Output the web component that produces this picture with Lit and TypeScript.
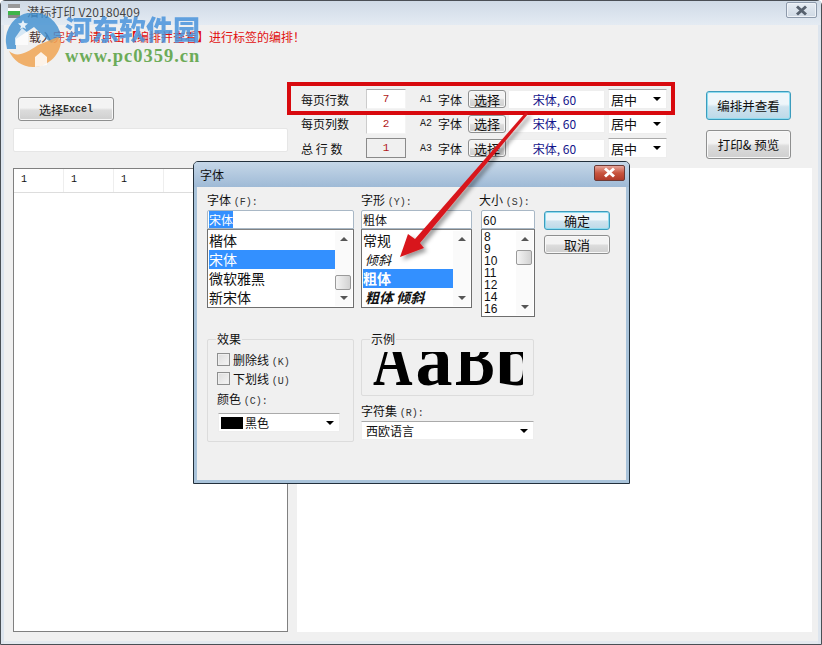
import { LitElement, html, css } from "lit";
import { customElement } from "lit/decorators.js";

const closeX = html`<svg width="13" height="11" viewBox="0 0 13 11"><path d="M2 1.5 L11 9.5 M11 1.5 L2 9.5" stroke="currentColor" stroke-width="3" fill="none"/></svg>`;
const caret = html`<span class="caret"></span>`;

@customElement("app-root")
export class AppRoot extends LitElement {
  static styles = css`
    :host { display: block; width: 822px; height: 645px; overflow: hidden; position: relative;
      font-family: "Noto Sans CJK SC", "Noto Sans", sans-serif; font-size: 12px; color: #111; }
    * { box-sizing: border-box; }
    .window { width: 822px; height: 645px; background: #f0f0f0; border: 1px solid #4a4f55; border-radius: 5px 5px 0 0;
      display: flex; flex-direction: column; box-shadow: inset 3px 0 0 #dde5ee, inset -3px 0 0 #dde5ee, inset 0 -3px 0 #e4e9ef; }
    .titlebar { height: 24px; flex: none; display: flex; align-items: center; background: linear-gradient(#cfdae6, #e4ebf3);
      padding: 0 4px 0 7px; }
    .app-ico { width: 12px; height: 14px; flex: none; margin-right: 7px; margin-top: -4px; background: linear-gradient(#999 0 4px, #fff 4px 7px, #3fb54a 7px 11px, #888 11px); }
    .title { color: #444; font-size: 12px; flex: 1; margin-top: -3px; letter-spacing: .15px; }
    .win-close { width: 31px; height: 16px; margin-top: -6px; border: 1px solid #8d9aab; border-radius: 2px; color: #57616e; background: linear-gradient(#e6ecf3, #cfd9e4);
      display: flex; align-items: center; justify-content: center; box-shadow: inset 0 0 0 1px #eef2f7; }
    .msg { height: 48px; padding: 3px 0 0 28px; color: #e10f0f; line-height: 18px; flex: none; }
    .msg b { font-weight: 400; color: #4a3030; }
    .msg em { font-style: normal; color: #d8302a; }
    .toolbar { display: flex; flex: none; height: 95px; padding-left: 12px; }
    .left { width: 275px; flex: none; display: flex; flex-direction: column; padding-top: 24px; }
    .left .btn { width: 96px; height: 24px; margin: 0 0 7px 5px; }
    .left .btn span { font-family: "Liberation Mono", monospace; font-size: 10px; font-weight: 700; color: #333; }
    .path { width: 275px; height: 24px; background: #fff; border: 1px solid #e6e6e6; border-radius: 2px; }
    .rows { width: 379px; margin-left: 13px; padding-top: 15px; flex: none; display: flex; flex-direction: column; gap: 2.5px; }
    .row { display: grid; grid-template-columns: 65px 40px 14px 18px 30px 39px 101px 59px; align-items: center; height: 22px; }
    .field { height: 20px; background: #fff; border: 1px solid #f4f4f4; border-top-color: #aaa; border-left-color: #ccc; color: #b01818; display: flex; align-items: center; justify-content: center; font-family: "Liberation Mono", monospace; font-size: 11px; }
    .field.ro { background: #f0f0f0; border: 1px solid #8a8a8a; }
    .a { font-family: "Liberation Mono", monospace; font-size: 10px; color: #222; }
    .btn { display: flex; align-items: center; justify-content: center; border: 1px solid #8e8f8f; border-radius: 3px; background: linear-gradient(#f3f3f3 0 45%, #dcdcdc 55%, #cfcfcf); color: #111; box-shadow: inset 0 0 0 1px #f8f8f8; padding: 0; font-family: inherit; font-size: 12px; }
    .btn.sm { width: 38px; height: 18px; font-size: 13px; }
    .btn.focus { border-color: #3c9cbd; background: linear-gradient(#eef6fa 0 45%, #cfe3ee 55%, #bcd9e8); box-shadow: inset 0 0 0 1px #8edcf0; }
    .fontval { height: 19px; margin-left: 1px; width: 97px; background: #fff; border: 1px solid #eee; color: #14148a; display: flex; align-items: center; justify-content: center; padding-right: 4px; }
    .combo { height: 20px; background: #fff; border: 1px solid #eee; border-top-color: #aaa; display: flex; align-items: center; padding: 0 2px; justify-content: space-between; color: #111; font-size: 13px; }
    .caret { width: 0; height: 0; border: 4px solid transparent; border-top: 4px solid #000; border-bottom: 0; margin-right: 3px; flex: none; }
    .actions { margin-left: 26px; width: 85px; padding-top: 18px; display: flex; flex-direction: column; gap: 10px; flex: none; }
    .actions .btn { height: 29px; font-size: 12.5px; }
    .content { flex: 1; display: flex; padding: 0 9px 12px 12px; gap: 9px; min-height: 0; }
    .table { width: 275px; border: 1px solid #808080; background: #fff; }
    .thead { height: 24px; display: grid; grid-template-columns: repeat(3, 50px) 1fr; border-bottom: 1px solid #ddd; }
    .thead div { border-right: 1px solid #eee; padding-left: 7px; line-height: 22px; font-family: "Liberation Mono", monospace; font-size: 10px; }
    .preview { flex: 1; background: #fff; }

    .watermark { position: absolute; left: 4px; top: 13px; display: flex; pointer-events: none; }
    .wm-text { margin-left: 3px; display: flex; flex-direction: column; }
    .wm-cn { color: #4a94dc; font-size: 27px; font-weight: 900; line-height: 32px; opacity: .85; }
    .wm-url { color: #6cab58; font-family: "Liberation Serif", serif; font-weight: 700; font-size: 18.5px; line-height: 22px; margin-top: 0; letter-spacing: 1px; }

    .redbox { position: absolute; left: 287px; top: 82px; width: 388px; height: 33px; border: 4px solid #d8090e; pointer-events: none; }
    .arrow { position: absolute; left: 0; top: 0; pointer-events: none; z-index: 3; }

    .dialog { position: absolute; left: 193px; top: 161px; width: 437px; height: 323px; border: 1px solid #22303c; border-radius: 5px 5px 0 0; background: #f0f0f0; display: flex; flex-direction: column; box-shadow: inset 0 0 0 3px #a9c3da, inset 0 -3px 0 #5aa9c6; z-index: 2; }
    .d-title { height: 25px; flex: none; display: flex; align-items: center; padding: 0 4px 0 6px; background: linear-gradient(#c5d7e8, #9fbad6); border-radius: 4px 4px 0 0; }
    .d-title span { flex: 1; }
    .d-close { width: 31px; height: 16px; margin-top: -4px; border: 1px solid #6b3a36; border-radius: 2px; color: #fff; background: linear-gradient(#e6a59b, #c9553f 50%, #b03a2a); display: flex; align-items: center; justify-content: center; }
    .d-body { flex: 1; padding: 6px 0 0 13px; display: flex; flex-direction: column; }
    .top { display: flex; height: 136px; flex: none; }
    .col { display: flex; flex-direction: column; }
    .c1 { width: 147px; }
    .c2 { width: 111px; margin-left: 7px; }
    .c3 { width: 54px; margin-left: 9px; }
    .cap { height: 17px; line-height: 13px; white-space: nowrap; }
    .c3 .cap { margin-left: -2px; }
    i { font-style: normal; font-family: "Liberation Mono", monospace; font-size: 10px; color: #333; }
    .edit { height: 19px; background: #fff; border: 1px solid #a9b8c6; border-radius: 2px 2px 0 0; line-height: 17px; padding-left: 1px; flex: none; }
    .sel { background: #3390ff; color: #fff; }
    .list { height: 79px; background: #fff; border: 1px solid #6e6e6e; border-top-color: #828282; display: flex; padding: 1px; position: relative; flex: none; }
    .list.long { height: 88px; }
    .items { flex: 1; font-size: 14px; overflow: hidden; min-width: 0; }
    .items div { height: 19px; line-height: 19px; white-space: nowrap; }
    .sm-items { font-size: 12px; padding-left: 1px; }
    .sm-items div { height: 12px; line-height: 12px; font-family: "Liberation Sans", sans-serif; }
    .items div.on { background: #3390ff; color: #fff; font-weight: 700; }
    .items div.on-n { background: #3390ff; color: #fff; }
    .items div.italic { font-style: italic; font-size: 13px; padding-left: 2px; }
    .items div.bi { font-style: italic; font-weight: 700; font-size: 14px; padding-left: 2px; }
    .scroll { width: 17px; flex: none; display: flex; flex-direction: column; justify-content: space-between; align-items: center; padding: 6px 0; background: #fafafa; position: relative; }
    .tri-u { width: 0; height: 0; border: 4px solid transparent; border-bottom: 4px solid #555; border-top: 0; }
    .tri-d { width: 0; height: 0; border: 4px solid transparent; border-top: 4px solid #555; border-bottom: 0; }
    .thumb { position: absolute; left: 0; width: 16px; height: 15px; border: 1px solid #9a9a9a; border-radius: 2px; background: linear-gradient(90deg, #f4f4f4, #d2d2d2); }
    .dlg-btns { margin-left: 9px; padding-top: 18px; display: flex; flex-direction: column; gap: 5px; }
    .dlg-btns .btn { width: 66px; height: 19px; font-size: 13px; }
    .bottom { display: flex; margin-top: 10px; }
    .group { border: 1px solid #dcdcdc; border-radius: 2px; position: relative; }
    .legend { position: absolute; top: -9px; left: 8px; background: #f0f0f0; padding: 0 1px; line-height: 16px; }
    .g1 { width: 147px; height: 103px; padding: 13px 0 0 9px; }
    .chk { display: flex; align-items: center; gap: 3px; height: 13px; margin-bottom: 6px; }
    .box { width: 13px; height: 13px; border: 1px solid #8e8f8f; background: linear-gradient(135deg, #dcdcdc, #f5f5f5); box-shadow: inset 0 0 0 1px #eee; flex: none; }
    .color-lab { line-height: 16px; margin-top: 1px; }
    .combo-d { height: 19px; background: #fff; border: 1px solid #eee; border-top-color: #aaa; display: flex; align-items: center; padding: 0 2px; flex: none; }
    .g1 .combo-d { width: 122px; margin: 3px 0 0 1px; }
    .swatch { width: 22px; height: 12px; background: #000; margin-right: 2px; flex: none; }
    .combo-d span.t { flex: 1; }
    .rightcol { width: 173px; margin-left: 7px; display: flex; flex-direction: column; }
    .rightcol .combo-d span.t { padding-left: 2px; }
    .g2 { height: 57px; flex: none; display: flex; justify-content: center; }
    .g2-clip { width: 150px; height: 36px; margin-top: 12px; overflow: hidden; position: relative; display: flex; align-items: flex-end; }
    .sample { display: flex; font-family: "Liberation Serif", serif; font-weight: 700; font-size: 74px; height: 36px; color: #000; flex: none; }
    .sample span { display: block; width: 41px; text-align: center; flex: none; line-height: 36px; height: 36px; position: relative; top: -10px; }
    .sample .sq1 { transform: scaleX(.74); transform-origin: 0 50%; }
    .sample .sq2 { transform: scaleX(.8); transform-origin: 0 50%; }
    .rightcol .cap { margin-top: 5px; height: 20px; line-height: 20px; }
  `;

  row(label: string, val: string, a: string, ro = false) {
    return html`<div class="row">
      <span>${label}</span>
      <div class="field ${ro ? "ro" : ""}">${val}</div>
      <span></span>
      <span class="a">${a}</span>
      <span>字体</span>
      <button class="btn sm">选择</button>
      <div class="fontval">宋体, 60</div>
      <div class="combo">居中${caret}</div>
    </div>`;
  }

  render() {
    return html`
      <div class="window">
        <div class="titlebar">
          <div class="app-ico"></div>
          <div class="title">潜标打印 V20180409</div>
          <div class="win-close">${closeX}</div>
        </div>
        <div class="msg"><b>载入</b><em>完毕</em>，请点击【编排并查看】进行标签的编排！</div>
        <div class="toolbar">
          <div class="left">
            <button class="btn">选择<span>Excel</span></button>
            <div class="path"></div>
          </div>
          <div class="rows">
            ${this.row("每页行数", "7", "A1")}
            ${this.row("每页列数", "2", "A2")}
            ${this.row("总 行 数", "1", "A3", true)}
          </div>
          <div class="actions">
            <button class="btn focus">编排并查看</button>
            <button class="btn">打印& 预览</button>
          </div>
        </div>
        <div class="content">
          <div class="table">
            <div class="thead"><div>1</div><div>1</div><div>1</div><div></div></div>
          </div>
          <div class="preview"></div>
        </div>
      </div>

      <div class="watermark">
        <svg width="58" height="54" viewBox="0 0 58 54">
          <path d="M2 30 A27 27 0 0 1 57 24 L47 30 L30 14 L12 26 L12 36 L3 36Z" fill="#3f8fd0" opacity=".8"/>
          <polygon points="11,25 18,15 24,20 24,32 11,32" fill="#fff" opacity=".75"/>
          <polygon points="19,7 20.5,10 24,10.5 21,13 22,16 19,14.5 16,16 17,13 14,10.5 17.5,10" fill="#fff" opacity=".85"/>
          <path d="M5 38 C12 44 20 42 34 32 L54 24 L57 28 C56 44 42 54 29 54 C18 54 9 47 5 38Z" fill="#f0a553" opacity=".85"/>
          <polygon points="31,54 31,44 37,39 43,44 43,52" fill="#fff" opacity=".85"/>
        </svg>
        <div class="wm-text">
          <div class="wm-cn">河东软件园</div>
          <div class="wm-url">www.pc0359.cn</div>
        </div>
      </div>

      <div class="redbox"></div>

      <div class="dialog">
        <div class="d-title"><span>字体</span><div class="d-close">${closeX}</div></div>
        <div class="d-body">
          <div class="top">
            <div class="col c1">
              <div class="cap">字体 <i>(F):</i></div>
              <div class="edit"><span class="sel">宋体</span></div>
              <div class="list">
                <div class="items"><div>楷体</div><div class="on-n">宋体</div><div>微软雅黑</div><div>新宋体</div></div>
                <div class="scroll"><span class="tri-u"></span><div class="thumb" style="top:44px"></div><span class="tri-d"></span></div>
              </div>
            </div>
            <div class="col c2">
              <div class="cap">字形 <i>(Y):</i></div>
              <div class="edit">粗体</div>
              <div class="list">
                <div class="items"><div>常规</div><div class="italic">倾斜</div><div class="on">粗体</div><div class="bi">粗体 倾斜</div></div>
                <div class="scroll"><span class="tri-u"></span><span class="tri-d"></span></div>
              </div>
            </div>
            <div class="col c3">
              <div class="cap">大小 <i>(S):</i></div>
              <div class="edit">60</div>
              <div class="list long">
                <div class="items sm-items"><div>8</div><div>9</div><div>10</div><div>11</div><div>12</div><div>14</div><div>16</div></div>
                <div class="scroll"><span class="tri-u"></span><div class="thumb" style="top:19px"></div><span class="tri-d"></span></div>
              </div>
            </div>
            <div class="dlg-btns">
              <button class="btn focus">确定</button>
              <button class="btn">取消</button>
            </div>
          </div>
          <div class="bottom">
            <div class="group g1">
              <div class="legend">效果</div>
              <div class="chk"><span class="box"></span><span>删除线 <i>(K)</i></span></div>
              <div class="chk"><span class="box"></span><span>下划线 <i>(U)</i></span></div>
              <div class="color-lab">颜色 <i>(C):</i></div>
              <div class="combo-d"><span class="swatch"></span><span class="t">黑色</span>${caret}</div>
            </div>
            <div class="rightcol">
              <div class="group g2">
                <div class="legend">示例</div>
                <div class="g2-clip"><div class="sample"><span class="sq1">A</span><span>a</span><span class="sq2">B</span><span>b</span></div></div>
              </div>
              <div class="cap">字符集 <i>(R):</i></div>
              <div class="combo-d"><span class="t">西欧语言</span>${caret}</div>
            </div>
          </div>
        </div>
      </div>

      <svg class="arrow" width="822" height="645" viewBox="0 0 822 645">
        <defs><filter id="s" x="-20%" y="-20%" width="140%" height="140%"><feDropShadow dx="3" dy="3" stdDeviation="2" flood-color="#000" flood-opacity=".4"/></filter></defs>
        <polygon points="400,257 408,234 415,239 526,112 528,114 420,243 424,248" fill="#d8191c" filter="url(#s)"/>
      </svg>
    `;
  }
}
